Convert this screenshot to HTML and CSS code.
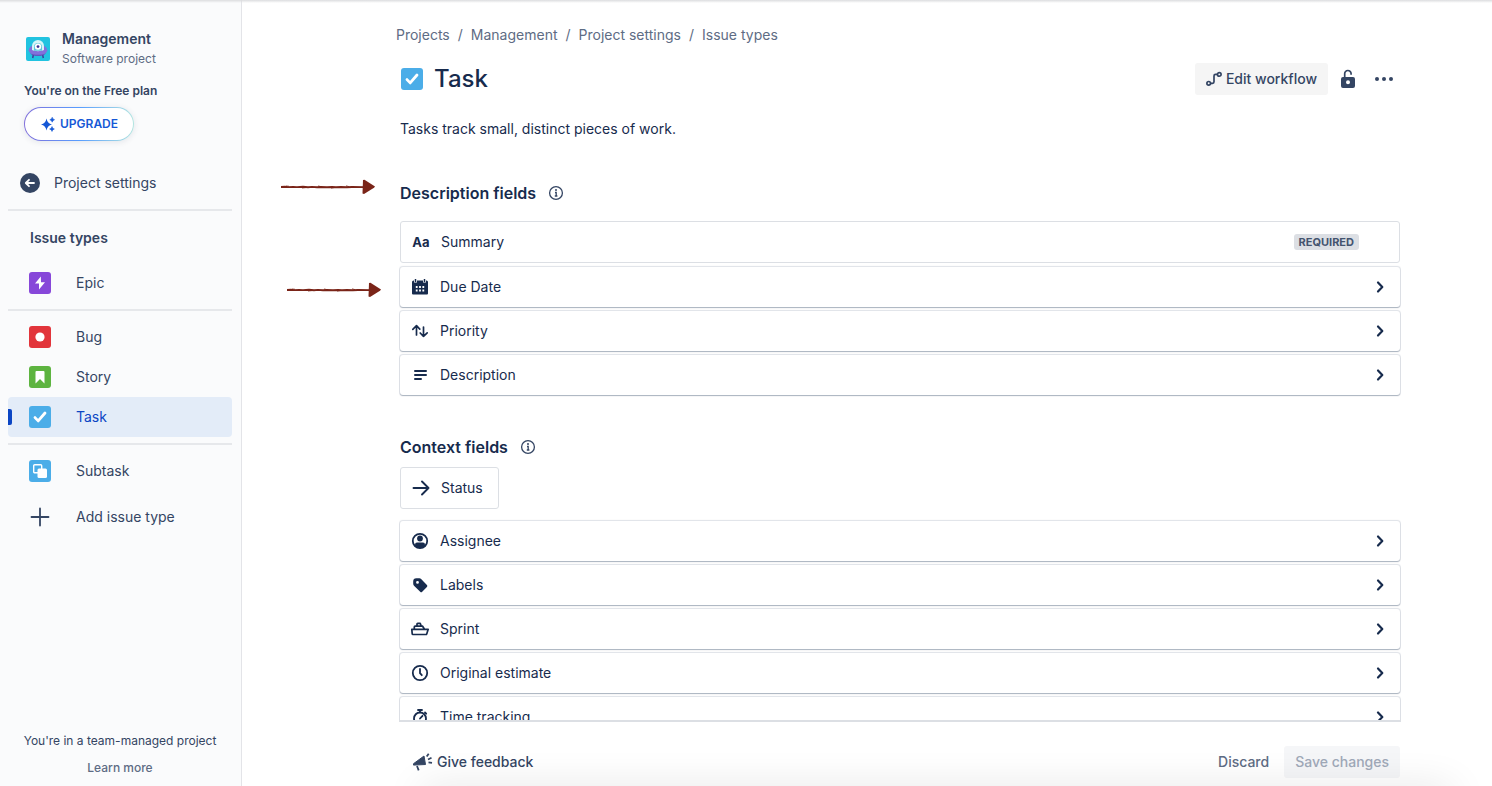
FILE: index.html
```html
<!DOCTYPE html>
<html lang="en">
<head>
    <meta charset="utf-8">
    <title>Task - Issue types</title>
    <link rel="stylesheet" href="styles.css">
</head>
<body>
    <!-- shared icons -->
    <svg class="sprite" width="0" height="0">
        <symbol id="chevron" viewBox="0 0 24 24">
            <path d="M10 7.500l4.300 4.500-4.300 4.500" fill="none" stroke="currentColor" stroke-width="2.200" stroke-linecap="round" stroke-linejoin="round"/>
        </symbol>
        <symbol id="task" viewBox="0 0 22 22">
            <rect width="22" height="22" rx="3" fill="#4BADE8"/>
            <path d="M6 11.600l3.200 3.300L16 7" fill="none" stroke="#fff" stroke-width="2.800" stroke-linecap="round" stroke-linejoin="round"/>
        </symbol>
        <symbol id="info" viewBox="0 0 16 16">
            <circle cx="8" cy="8" r="6.400" fill="none" stroke="currentColor" stroke-width="1.300"/>
            <circle cx="8" cy="5" r="1" fill="currentColor"/>
            <path d="M7 7.500h1.200v3.200M6.800 11h2.600" fill="none" stroke="currentColor" stroke-width="1.300"/>
        </symbol>
        <symbol id="arrow" viewBox="0 0 96 16">
            <path d="M1 8l4-.2 3 .3 5-.2 4 .2 6-.3 5 .4 4-.3 5 .3 4-.2 6 .3 5-.3 4 .3 5-.3 6 .2 5-.2 12 .1" fill="none" stroke="#7A2418" stroke-width="1.900"/>
            <path d="M6 7l3 .3M22 9l4-.4M38 7l3 .6M51 9.100l4-.7M66 6.900l3 .7" stroke="#7A2418" stroke-width=".8"/>
            <path d="M83 1l1.500-.3L95 7.500l-1 1.200L84 15l-1.500-.5z" fill="#7A2418"/>
        </symbol>
    </svg>

    <aside class="sidebar">
        <div class="project">
            <svg class="avatar" width="24" height="24" viewBox="0 0 24 24">
                <rect width="24" height="24" rx="2" fill="#21C3E0"/>
                <path d="M7.500 17l-.8 4M16.500 17l.8 4" stroke="#403294" stroke-width="1.400"/>
                <ellipse cx="12" cy="13.200" rx="9.300" ry="5.800" fill="#8270DB"/>
                <path d="M4 16.200c4 2.200 12 2.200 16 0-2 3.400-14 3.400-16 0z" fill="#5E4DB2"/>
                <path d="M6 13V9a6 6 0 0 1 12 0v4c-3 1.500-9 1.500-12 0z" fill="#D5F5F8"/>
                <path d="M8 13.800V10a4 4 0 0 1 8 0v3.800z" fill="#5BC8DC"/>
                <circle cx="12" cy="9.600" r="3.200" fill="#fff"/>
                <circle cx="12" cy="9.600" r="1.400" fill="#403294"/>
            </svg>
            <div>
                <div class="project-name">Management</div>
                <div class="project-type">Software project</div>
            </div>
        </div>
        <div class="plan">You're on the Free plan</div>
        <button class="upgrade" type="button">
            <svg width="16" height="16" viewBox="0 0 16 16" fill="currentColor">
                <path d="M6.500 2.500Q7.400 7.400 12 8.500 7.400 9.600 6.500 14.500 5.600 9.600 1 8.500 5.600 7.400 6.500 2.500z"/>
                <path d="M12.200 1.200q.4 2 2.400 2.500-2 .5-2.400 2.500-.4-2-2.400-2.500 2-.5 2.400-2.500zM12 10.500q.4 2 2.400 2.500-2 .5-2.400 2.500-.4-2-2.400-2.500 2-.5 2.400-2.500z" stroke="currentColor" stroke-width=".5"/>
            </svg>
            UPGRADE
        </button>

        <a class="back" href="#">
            <svg width="20" height="20" viewBox="0 0 20 20">
                <circle cx="10" cy="10" r="10" fill="currentColor"/>
                <path d="M14 10H6M9 6.800L5.800 10 9 13.200" fill="none" stroke="#fff" stroke-width="1.800" stroke-linecap="round" stroke-linejoin="round"/>
            </svg>
            Project settings
        </a>
        <hr>
        <h2 class="nav-title">Issue types</h2>
        <nav>
            <a class="nav-item" href="#">
                <svg width="22" height="22" viewBox="0 0 22 22">
                    <rect width="22" height="22" rx="3" fill="#8747D9"/>
                    <path d="M11.800 4.500L6 11.500h4v6l6-7.300h-4z" fill="#fff"/>
                </svg>
                Epic
            </a>
            <hr>
            <a class="nav-item" href="#">
                <svg width="22" height="22" viewBox="0 0 22 22">
                    <rect width="22" height="22" rx="3" fill="#E2353B"/>
                    <circle cx="11" cy="11" r="4.600" fill="#fff"/>
                </svg>
                Bug
            </a>
            <a class="nav-item" href="#">
                <svg width="22" height="22" viewBox="0 0 22 22">
                    <rect width="22" height="22" rx="3" fill="#5DB440"/>
                    <path d="M6.500 6q0-1 1-1h7q1 0 1 1v11.500L11 13l-4.500 4.500z" fill="#fff"/>
                </svg>
                Story
            </a>
            <a class="nav-item active" href="#">
                <svg width="22" height="22"><use href="#task"/></svg>
                Task
            </a>
            <hr>
            <a class="nav-item" href="#">
                <svg width="22" height="22" viewBox="0 0 22 22">
                    <rect width="22" height="22" rx="3" fill="#4BADE8"/>
                    <rect x="4.700" y="4.700" width="8" height="8" rx="1" fill="none" stroke="#fff" stroke-width="1.400"/>
                    <rect x="8.500" y="8.500" width="9.500" height="9.500" rx="1.500" fill="#fff"/>
                </svg>
                Subtask
            </a>
        </nav>
        <button class="nav-item add" type="button">
            <svg width="22" height="22" viewBox="0 0 22 22">
                <path d="M11 2.500v17M2.500 11h17" stroke="currentColor" stroke-width="1.800" stroke-linecap="round"/>
            </svg>
            Add issue type
        </button>

        <div class="sidebar-footer">
            <p>You're in a team-managed project</p>
            <a href="#">Learn more</a>
        </div>
    </aside>

    <main>
        <header>
            <nav class="breadcrumbs">
                <a href="#">Projects</a><span>/</span><a href="#">Management</a><span>/</span><a href="#">Project settings</a><span>/</span><a href="#">Issue types</a>
            </nav>
            <div class="title-row">
                <svg width="24" height="24" viewBox="-1 -1 24 24"><use href="#task" width="22" height="22"/></svg>
                <h1>Task</h1>
                <button class="btn workflow" type="button">
                    <svg width="16" height="16" viewBox="0 0 16 16" fill="none" stroke="currentColor" stroke-width="1.700">
                        <circle cx="2.700" cy="12.300" r="1.800"/>
                        <circle cx="13.300" cy="3.400" r="1.800"/>
                        <path d="M4.700 12.300h1.800q1.500 0 1.500-1.500V4.900q0-1.500 1.500-1.500h1.800"/>
                    </svg>
                    Edit workflow
                </button>
                <button class="icon-btn" type="button" aria-label="Permissions">
                    <svg width="20" height="20" viewBox="0 0 20 20">
                        <path d="M6.700 9V4.800a3.200 3.200 0 0 1 6.400-.2v1.100" fill="none" stroke="currentColor" stroke-width="1.700"/>
                        <path fill-rule="evenodd" d="M5 8h10q2 0 2 2v7q0 2-2 2H5q-2 0-2-2v-7q0-2 2-2zM10 11.300a2 2 0 1 0 0 4 2 2 0 0 0 0-4z" fill="currentColor"/>
                    </svg>
                </button>
                <button class="icon-btn" type="button" aria-label="More">
                    <svg width="20" height="20" viewBox="0 0 20 20" fill="currentColor">
                        <circle cx="3" cy="10" r="2"/><circle cx="10" cy="10" r="2"/><circle cx="17" cy="10" r="2"/>
                    </svg>
                </button>
            </div>
            <p class="summary">Tasks track small, distinct pieces of work.</p>
        </header>

        <div class="fields">
            <section>
                <h2>Description fields <svg width="16" height="16"><use href="#info"/></svg></h2>
                <div class="field fixed">
                    <span class="aa">Aa</span>
                    Summary
                    <span class="badge">REQUIRED</span>
                </div>
                <button class="field" type="button">
                    <svg width="20" height="20" viewBox="0 0 20 20">
                        <path d="M2 5q0-1.500 1.500-1.500h13Q18 3.500 18 5v11.500q0 1-1 1H3q-1 0-1-1z" fill="currentColor"/>
                        <path d="M5.500 2v3.500M14.500 2v3.500" stroke="#fff" stroke-width="3"/>
                        <path d="M5.500 2v3M14.500 2v3" stroke="currentColor" stroke-width="1.500"/>
                        <path d="M5.800 10h1.800M9.100 10h1.800M12.400 10h1.800M5.800 13.500h1.800M9.100 13.500h1.800M12.400 13.500h1.800" stroke="#fff" stroke-width="1.800"/>
                    </svg>
                    Due Date
                    <svg class="chevron" width="24" height="24"><use href="#chevron"/></svg>
                </button>
                <button class="field" type="button">
                    <svg width="20" height="20" viewBox="0 0 20 20" fill="none" stroke="currentColor" stroke-width="1.700" stroke-linecap="round" stroke-linejoin="round">
                        <path d="M6.500 14V4.800M2.800 8.300l3.700-3.600 3.300 3.400M13.500 6v9.300M10.200 12l3.300 3.400 3.700-3.600"/>
                    </svg>
                    Priority
                    <svg class="chevron" width="24" height="24"><use href="#chevron"/></svg>
                </button>
                <button class="field" type="button">
                    <svg width="20" height="20" viewBox="0 0 20 20" stroke="currentColor" stroke-width="2" stroke-linecap="round">
                        <path d="M5 6h11M5 10h11M5 14h6"/>
                    </svg>
                    Description
                    <svg class="chevron" width="24" height="24"><use href="#chevron"/></svg>
                </button>
            </section>

            <section class="context">
                <h2>Context fields <svg width="16" height="16"><use href="#info"/></svg></h2>
                <div class="field fixed status">
                    <svg width="20" height="20" viewBox="0 0 20 20" fill="none" stroke="currentColor" stroke-width="1.900" stroke-linecap="round" stroke-linejoin="round">
                        <path d="M2.500 10h15M11 3.500l6.500 6.500-6.500 6.500"/>
                    </svg>
                    Status
                </div>
                <button class="field" type="button">
                    <svg width="20" height="20" viewBox="0 0 20 20">
                        <circle cx="10" cy="10" r="7.200" fill="none" stroke="currentColor" stroke-width="1.800"/>
                        <circle cx="10" cy="7.500" r="2.900" fill="currentColor"/>
                        <path d="M5 15.500v-2q0-2 2-2h6q2 0 2 2v2q-4.500 3.500-10 0z" fill="currentColor"/>
                    </svg>
                    Assignee
                    <svg class="chevron" width="24" height="24"><use href="#chevron"/></svg>
                </button>
                <button class="field" type="button">
                    <svg width="20" height="20" viewBox="0 0 20 20">
                        <path fill-rule="evenodd" d="M3.200 8.500V6.500q0-3.200 3.200-3.200h3q1 0 1.700.7l5.800 6q1 1 0 2l-4.700 4.700q-1 1-2 0l-6.200-6q-.8-.8-.8-2.200zM7.500 6a1.400 1.400 0 1 0 0 2.800 1.400 1.400 0 0 0 0-2.800z" fill="currentColor"/>
                    </svg>
                    Labels
                    <svg class="chevron" width="24" height="24"><use href="#chevron"/></svg>
                </button>
                <button class="field" type="button">
                    <svg width="20" height="20" viewBox="0 0 20 20" fill="none" stroke="currentColor" stroke-width="1.700" stroke-linejoin="round">
                        <path d="M1.800 10.300h16.400l-1.500 4.600q-.2.600-1 .6H3q-.8 0-.8-.8zM4.300 10V8q0-.8.800-.8h7.500l1.900 3M7 7V5q0-.7.700-.7h2.500l1 2.700"/>
                    </svg>
                    Sprint
                    <svg class="chevron" width="24" height="24"><use href="#chevron"/></svg>
                </button>
                <button class="field" type="button">
                    <svg width="20" height="20" viewBox="0 0 20 20" fill="none" stroke="currentColor" stroke-width="1.800" stroke-linecap="round">
                        <circle cx="10" cy="10" r="7.200"/>
                        <path d="M10 6v4.200l1.800 2"/>
                    </svg>
                    Original estimate
                    <svg class="chevron" width="24" height="24"><use href="#chevron"/></svg>
                </button>
                <button class="field" type="button">
                    <svg width="20" height="20" viewBox="0 0 20 20" fill="none" stroke="currentColor" stroke-width="1.800" stroke-linecap="round">
                        <circle cx="10" cy="11.500" r="6"/>
                        <path d="M8 3h4M10 3v2M15 5.500l1.200 1.200M10 11.500l2.500-2.700"/>
                    </svg>
                    Time tracking
                    <svg class="chevron" width="24" height="24"><use href="#chevron"/></svg>
                </button>
            </section>
        </div>

        <footer>
            <button class="btn plain feedback" type="button">
                <svg width="22" height="20" viewBox="0 0 22 20">
                    <path d="M2.500 11.700L13 4l1.500 8.500-12 .6z" fill="currentColor" stroke="currentColor" stroke-linejoin="round"/>
                    <path d="M6 14l1.700 4.300M15.700 4.500l2-2.800M17 7.500l3.500-1.700M17.500 10.300l3.500.5" fill="none" stroke="currentColor" stroke-width="1.800"/>
                </svg>
                Give feedback
            </button>
            <button class="btn plain discard" type="button">Discard</button>
            <button class="btn" type="button" disabled>Save changes</button>
        </footer>

        <!-- callout arrows -->
        <svg class="callout first" width="96" height="16"><use href="#arrow"/></svg>
        <svg class="callout second" width="96" height="16"><use href="#arrow"/></svg>
    </main>
</body>
</html>
```

FILE: styles.css
```css
* {
    box-sizing: border-box;
}
body {
    display: flex;
    height: 100vh;
    margin: 0;
    overflow: hidden;
    font-family: Inter, "Liberation Sans", sans-serif;
    font-size: 14px;
    line-height: 20px;
    color: #172B4D;
    background-color: #fff;
}
body::before {
    content: "";
    position: absolute;
    top: 0;
    width: 100%;
    height: 3px;
    background: linear-gradient(#dcdddf, rgba(220, 221, 223, 0));
}
h1, h2, p {
    margin: 0;
}
a {
    color: inherit;
    text-decoration: none;
}
button {
    border: none;
    background: none;
    color: inherit;
    font: inherit;
    cursor: pointer;
}
svg {
    flex: none;
}
.sprite {
    position: absolute;
}

/* sidebar */
.sidebar {
    display: flex;
    flex-direction: column;
    flex: none;
    width: 242px;
    padding: 29px 9px 8px 8px;
    border-right: 1px solid #e3e4e8;
    background-color: #FAFBFC;
    color: #344563;
}
.project {
    display: flex;
    align-items: center;
    gap: 12px;
    padding-left: 18px;
}
.project-name {
    font-weight: 600;
}
.project-type {
    font-size: 12px;
    line-height: 20px;
    color: #5E6C84;
}
.plan {
    margin: 14px 0 8px 16px;
    font-size: 12px;
    line-height: 16px;
    font-weight: 600;
}
.upgrade {
    display: flex;
    align-items: center;
    align-self: flex-start;
    gap: 4px;
    height: 34px;
    margin-left: 16px;
    padding: 0 15px;
    border: 1px solid transparent;
    border-radius: 17px;
    background: linear-gradient(#fff, #fff) padding-box, linear-gradient(90deg, #8270DB, #579DFF, #B3E5E0) border-box;
    box-shadow: 0 1px 6px rgba(9, 30, 66, 0.1);
    color: #1558D6;
    font-size: 12px;
    font-weight: 600;
}
.back {
    display: flex;
    align-items: center;
    gap: 14px;
    height: 40px;
    margin-top: 22px;
    padding-left: 12px;
}
hr {
    width: 100%;
    height: 2px;
    margin: 6px 0;
    border: none;
    background-color: #e6e8eb;
}
.nav-item {
    display: flex;
    align-items: center;
    gap: 25px;
    width: 100%;
    height: 40px;
    padding: 0 21px;
    border-radius: 4px;
    text-align: left;
}
.nav-item.active {
    position: relative;
    background-color: #E3ECF8;
    color: #0C46C4;
}
.nav-item.active::before {
    content: "";
    position: absolute;
    left: 0;
    top: 12px;
    width: 4px;
    height: 16px;
    border-radius: 0 2px 2px 0;
    background-color: #0C46C4;
}
.add {
    flex: none;
    margin-top: 6px;
}
.sidebar-footer {
    margin-top: auto;
    text-align: center;
    font-size: 12px;
}
.sidebar-footer p {
    margin-bottom: 7px;
}
.sidebar-footer a {
    color: #5E6C84;
    font-weight: 500;
}

/* main column */
main {
    position: relative;
    display: flex;
    flex-direction: column;
    flex: 1;
    min-width: 0;
    padding: 25px 91px 0 157px;
    overflow: hidden;
}
header {
    padding: 0 1px;
}
.breadcrumbs {
    display: flex;
    gap: 8px;
    margin-left: -4px;
    color: #5E6C84;
}
.title-row {
    display: flex;
    align-items: center;
    gap: 4px;
    height: 32px;
    margin: 18px 0 24px;
}
h1 {
    margin: 0 auto 0 6px;
    font-size: 24px;
    line-height: 32px;
    font-weight: 500;
}
.btn {
    display: flex;
    align-items: center;
    gap: 4px;
    height: 32px;
    padding: 0 11px;
    border-radius: 3px;
    background-color: #F5F5F5;
    color: #344563;
    font-weight: 500;
}
.btn:disabled {
    background-color: rgba(9, 30, 66, 0.04);
    color: #A0A9B8;
}
.btn.plain {
    background: none;
}
.icon-btn {
    display: flex;
    align-items: center;
    justify-content: center;
    width: 32px;
    height: 32px;
    padding: 0;
    color: #344563;
}
.fields {
    flex: 1;
    min-height: 0;
    margin-top: 42px;
    padding: 0 1px;
    overflow: hidden;
    border-bottom: 2px solid #DCDFE4;
}
section {
    display: flex;
    flex-direction: column;
    gap: 4px;
}
h2 {
    display: flex;
    align-items: center;
    gap: 12px;
    margin-bottom: 12px;
    font-size: 16px;
    line-height: 24px;
    font-weight: 600;
}
h2 svg {
    color: #344563;
}
.nav-title {
    margin: 11px 0 15px 22px;
    font-size: 14px;
    line-height: 20px;
}
.context {
    margin-top: 40px;
}
.context h2 {
    margin-bottom: 4px;
}
.field {
    display: flex;
    align-items: center;
    gap: 10px;
    height: 40px;
    padding: 0 8px 0 10px;
    border-radius: 3px;
    background-color: #fff;
    box-shadow: 0 1px 1px rgba(9, 30, 66, 0.25), 0 0 1px 1px rgba(9, 30, 66, 0.13);
    text-align: left;
}
.field.fixed {
    height: 42px;
    border: 1px solid #DCDFE4;
    box-shadow: none;
}
.field.status {
    align-self: flex-start;
    margin-bottom: 8px;
    padding-right: 15px;
}
.chevron {
    margin-left: auto;
}
.aa {
    width: 20px;
    text-align: center;
    font-size: 13px;
    font-weight: 700;
}
.badge {
    margin: 0 32px 0 auto;
    padding: 0 5px;
    border-radius: 3px;
    background-color: #DCDFE4;
    color: #44546F;
    font-size: 11px;
    line-height: 16px;
    font-weight: 700;
}
footer {
    display: flex;
    align-items: center;
    padding: 24px 1px 8px;
}
.feedback {
    margin-right: auto;
}
.discard {
    margin-right: 4px;
    color: #5E6C84;
}

/* soft shade along the bottom edge */
main::after {
    content: "";
    position: absolute;
    left: 180px;
    right: 40px;
    bottom: -24px;
    height: 20px;
    box-shadow: 0 0 40px rgba(0, 0, 0, 0.14);
    pointer-events: none;
}

.callout {
    position: absolute;
    left: 38px;
    top: 179px;
}
.callout.second {
    left: 44px;
    top: 282px;
}
```
